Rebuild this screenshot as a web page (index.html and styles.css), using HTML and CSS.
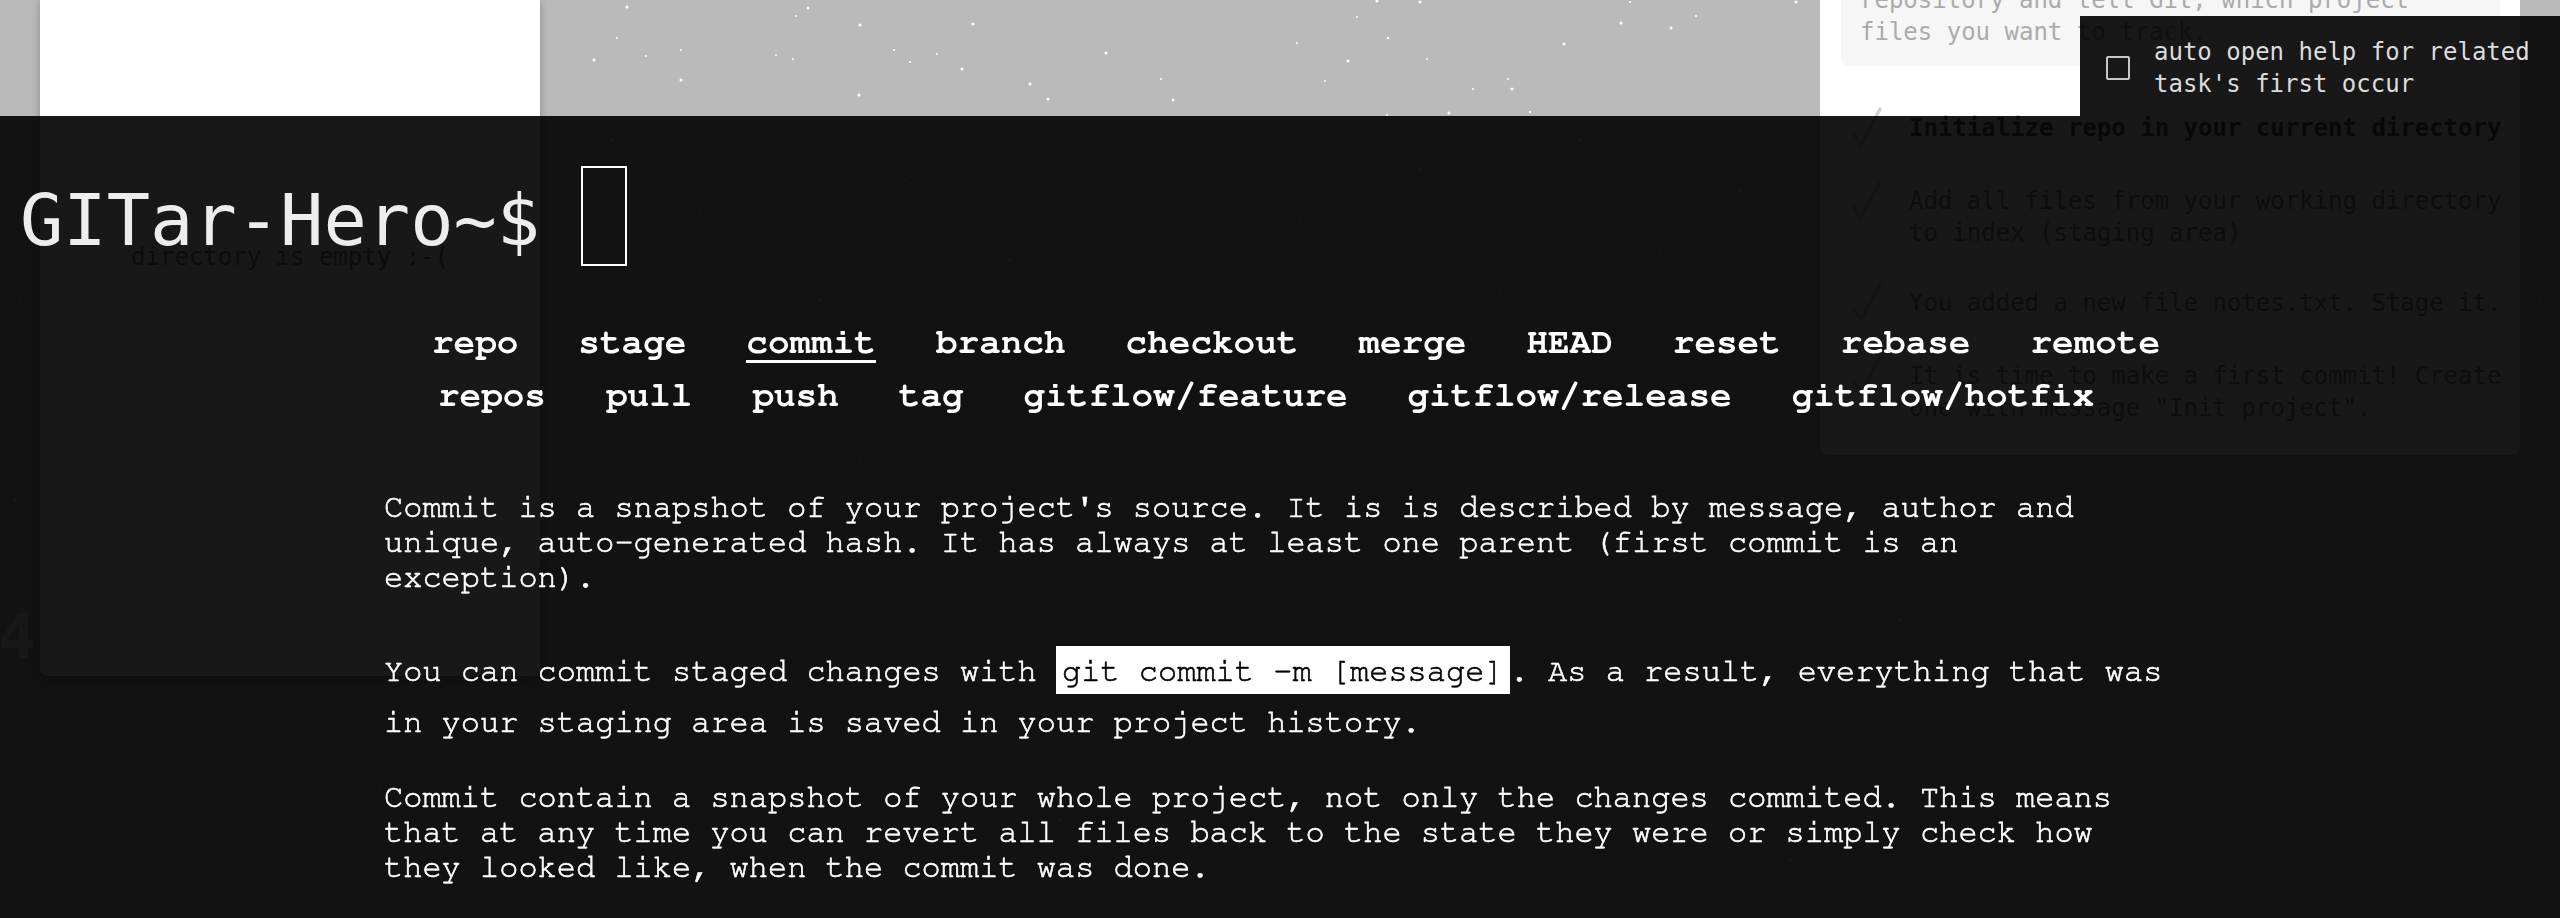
FILE: index.html
```html
<!DOCTYPE html>
<html lang="en">
<head>
<meta charset="utf-8">
<title>GITar-Hero</title>
<link rel="stylesheet" href="styles.css">
</head>
<body>
<div class="app">
  <svg class="stars" width="2560" height="918" viewBox="0 0 2560 918" aria-hidden="true">
    <g fill="#ffffff">
      <circle cx="627" cy="7" r="1.5"/><circle cx="808" cy="8" r="1.5"/><circle cx="796" cy="16" r="1"/>
      <circle cx="860" cy="25" r="1.5"/><circle cx="617" cy="38" r="1"/><circle cx="681" cy="50" r="1"/>
      <circle cx="594" cy="60" r="1.5"/><circle cx="646" cy="56" r="1"/><circle cx="776" cy="55" r="1"/>
      <circle cx="793" cy="59" r="1"/><circle cx="894" cy="50" r="1"/><circle cx="681" cy="80" r="1.5"/>
      <circle cx="859" cy="95" r="1.5"/><circle cx="1377" cy="1" r="1.5"/><circle cx="1420" cy="2" r="1.5"/>
      <circle cx="1630" cy="2" r="1"/><circle cx="1796" cy="2" r="1.5"/><circle cx="1357" cy="17" r="1"/>
      <circle cx="1696" cy="16" r="1"/><circle cx="973" cy="24" r="1.5"/><circle cx="1621" cy="23" r="1.5"/>
      <circle cx="1671" cy="28" r="1.5"/><circle cx="1388" cy="38" r="1.2"/><circle cx="1297" cy="43" r="1"/>
      <circle cx="1564" cy="44" r="1.5"/><circle cx="1106" cy="53" r="1.5"/><circle cx="937" cy="54" r="1"/>
      <circle cx="910" cy="62" r="1"/><circle cx="1348" cy="61" r="1.5"/><circle cx="1427" cy="59" r="1"/>
      <circle cx="962" cy="69" r="1.5"/><circle cx="1161" cy="79" r="1"/><circle cx="1325" cy="81" r="1"/>
      <circle cx="1508" cy="79" r="1"/><circle cx="1030" cy="84" r="1.5"/><circle cx="1473" cy="89" r="1"/>
      <circle cx="1512" cy="89" r="1.5"/><circle cx="1048" cy="99" r="1.5"/><circle cx="1173" cy="100" r="1.5"/>
      <circle cx="1449" cy="113" r="1.5"/><circle cx="1530" cy="112" r="1.2"/><circle cx="1387" cy="115" r="1"/>
      <circle cx="612" cy="140" r="1.5"/><circle cx="700" cy="210" r="1"/><circle cx="820" cy="300" r="1.5"/>
      <circle cx="905" cy="180" r="1"/><circle cx="1010" cy="260" r="1.5"/><circle cx="1120" cy="150" r="1"/>
      <circle cx="1210" cy="330" r="1.5"/><circle cx="1300" cy="220" r="1"/><circle cx="1420" cy="170" r="1.5"/>
      <circle cx="1500" cy="290" r="1"/><circle cx="1580" cy="140" r="1.5"/><circle cx="1660" cy="250" r="1"/>
      <circle cx="1740" cy="190" r="1.5"/><circle cx="600" cy="420" r="1"/><circle cx="720" cy="500" r="1.5"/>
      <circle cx="860" cy="460" r="1"/><circle cx="980" cy="540" r="1.5"/><circle cx="1090" cy="480" r="1"/>
      <circle cx="1230" cy="560" r="1.5"/><circle cx="1350" cy="430" r="1"/><circle cx="1470" cy="520" r="1.5"/>
      <circle cx="1600" cy="470" r="1"/><circle cx="1720" cy="560" r="1.5"/><circle cx="650" cy="700" r="1"/>
      <circle cx="780" cy="760" r="1.5"/><circle cx="930" cy="680" r="1"/><circle cx="1060" cy="820" r="1.5"/>
      <circle cx="1180" cy="740" r="1"/><circle cx="1320" cy="880" r="1.5"/><circle cx="1440" cy="700" r="1"/>
      <circle cx="1560" cy="800" r="1.5"/><circle cx="1690" cy="690" r="1"/><circle cx="1790" cy="860" r="1.5"/>
      <circle cx="100" cy="760" r="1"/><circle cx="240" cy="840" r="1.5"/><circle cx="380" cy="790" r="1"/>
      <circle cx="1900" cy="620" r="1.5"/><circle cx="2050" cy="700" r="1"/><circle cx="2200" cy="560" r="1.5"/>
      <circle cx="2350" cy="650" r="1"/><circle cx="2480" cy="780" r="1.5"/><circle cx="20" cy="300" r="1"/>
      <circle cx="15" cy="500" r="1.5"/><circle cx="2540" cy="300" r="1"/><circle cx="2545" cy="600" r="1.5"/>
    </g>
  </svg>
  <div class="counter">41</div>

  <aside class="workdir">
    <p class="empty">directory is empty :-(</p>
  </aside>

  <div class="graph"></div>

  <section class="tasks">
    <p class="hint">First of all you have to create a new repository and tell Git, which project files you want to track.</p>
    <ul class="task-list">
      <li class="task current">
        <svg class="check" width="32" height="40" viewBox="0 0 32 40"><polyline points="3,26 11,38 30,2"/></svg>
        <span>Initialize repo in your current directory</span>
      </li>
      <li class="task">
        <svg class="check" width="32" height="40" viewBox="0 0 32 40"><polyline points="3,26 11,38 30,2"/></svg>
        <span>Add all files from your working directory to index (staging area)</span>
      </li>
      <li class="task">
        <svg class="check" width="32" height="40" viewBox="0 0 32 40"><polyline points="3,26 11,38 30,2"/></svg>
        <span>You added a new file notes.txt. Stage it.</span>
      </li>
      <li class="task">
        <svg class="check" width="32" height="40" viewBox="0 0 32 40"><polyline points="3,26 11,38 30,2"/></svg>
        <span>It is time to make a first commit! Create one with message "Init project".</span>
      </li>
    </ul>
  </section>
</div>

<div class="overlay">
  <h1 class="prompt">GITar-Hero~$ <span class="cursor"></span></h1>
  <div class="help">
    <ul class="nav">
      <li>repo</li>
      <li>stage</li>
      <li class="active">commit</li>
      <li>branch</li>
      <li>checkout</li>
      <li>merge</li>
      <li>HEAD</li>
      <li>reset</li>
      <li>rebase</li>
      <li>remote</li>
      <li>repos</li>
      <li>pull</li>
      <li>push</li>
      <li>tag</li>
      <li>gitflow/feature</li>
      <li>gitflow/release</li>
      <li>gitflow/hotfix</li>
    </ul>
    <div class="article">
      <p>Commit is a snapshot of your project's source. It is is described by message, author and unique, auto-generated hash. It has always at least one parent (first commit is an exception).</p>
      <p>You can commit staged changes with <code>git commit -m [message]</code>. As a result, everything that was in your staging area is saved in your project history.</p>
      <p>Commit contain a snapshot of your whole project, not only the changes commited. This means that at any time you can revert all files back to the state they were or simply check how they looked like, when the commit was done.</p>
    </div>
  </div>
</div>

<label class="autohelp">
  <input type="checkbox" class="autohelp-box">
  <span class="autohelp-text">auto open help for related task's first occur</span>
</label>
</body>
</html>
```

FILE: styles.css
```css
* {
  box-sizing: border-box;
  margin: 0;
  padding: 0;
}

html,
body {
  width: 2560px;
  height: 918px;
  overflow: hidden;
}

body {
  position: relative;
  background: #bababa;
  font-family: "DejaVu Sans Mono", monospace;
}

/* ---------- background application ---------- */
.app {
  position: relative;
  display: flex;
  align-items: flex-start;
  height: 918px;
}

.stars {
  position: absolute;
  left: 0;
  top: 0;
}

.counter {
  position: absolute;
  left: -2px;
  top: 602px;
  font-family: "DejaVu Sans Mono", monospace;
  font-weight: bold;
  font-size: 62px;
  line-height: 70px;
  color: #ffffff;
}

.workdir {
  position: relative;
  flex: 0 0 500px;
  margin-left: 40px;
  height: 676px;
  padding-top: 241px;
  background: #ffffff;
  border-radius: 0 0 8px 8px;
  box-shadow: 0 2px 8px rgba(0, 0, 0, 0.25);
  text-align: center;
}

.empty {
  font-size: 24px;
  line-height: 32px;
  color: #7c7c7c;
}

.graph {
  flex: 1;
}

.tasks {
  position: relative;
  flex: 0 0 700px;
  margin-right: 40px;
  padding: 0 15px 31px 21px;
  background: #ffffff;
  border-radius: 0 0 8px 8px;
  font-size: 24px;
  line-height: 32px;
}

.hint {
  margin-top: -64px;
  margin-right: 5px;
  padding: 16px 19px 18px;
  background: #f6f6f6;
  border-radius: 8px;
  color: #ababab;
}

.task-list {
  list-style: none;
  display: flex;
  flex-direction: column;
  gap: 38px;
  margin-top: 46px;
}

.task {
  display: flex;
  align-items: flex-start;
  gap: 27px;
  padding-left: 9px;
  color: #8c8c8c;
}

.task.current {
  color: #5a5a5a;
  font-weight: bold;
}

.check {
  flex: 0 0 32px;
  margin-top: -5px;
  fill: none;
  stroke: #d2d2d2;
  stroke-width: 3.5;
  stroke-linecap: round;
  stroke-linejoin: round;
}

/* ---------- help overlay ---------- */
.overlay {
  position: fixed;
  top: 116px;
  left: 0;
  right: 0;
  bottom: 0;
  background: rgba(0, 0, 0, 0.904);
  color: #ffffff;
  font-family: "Nimbus Mono PS", "Nimbus Mono L", "FreeMono", "Courier New", "Liberation Mono", monospace;
}

.prompt {
  padding: 50px 0 0 20px;
  font-family: "DejaVu Sans Mono", monospace;
  font-weight: normal;
  font-size: 72px;
  line-height: 72px;
  color: #ededed;
  white-space: pre;
}

.cursor {
  display: inline-block;
  width: 46px;
  height: 100px;
  margin-left: -3px;
  border: 2px solid #ffffff;
  vertical-align: -21px;
}

.help {
  width: 1792px;
  margin: 0 auto;
}

.nav {
  list-style: none;
  display: flex;
  flex-wrap: wrap;
  justify-content: center;
  column-gap: 60px;
  row-gap: 14px;
  margin: 58px -48px 0 -16px;
}

.nav li {
  font-weight: bold;
  font-size: 36px;
  line-height: 36px;
  border-bottom: 3px solid transparent;
}

.nav li:last-child {
  margin-right: 60px;
}

.nav li.active {
  border-bottom-color: #ffffff;
}

.article {
  margin-top: 74px;
  font-size: 32px;
  line-height: 35px;
  -webkit-text-stroke: 0.6px #ffffff;
}

.article p + p {
  margin-top: 40px;
}

.article code {
  display: inline-block;
  margin: 11px 0;
  padding: 8px 6px 5px;
  background: #ffffff;
  color: #000000;
  font: inherit;
  -webkit-text-stroke: 0.6px #000000;
}

/* ---------- auto-help toggle ---------- */
.autohelp {
  position: absolute;
  top: 16px;
  left: 2080px;
  right: 0;
  height: 100px;
  display: flex;
  align-items: flex-start;
  gap: 24px;
  padding: 20px 20px 0 26px;
  background: rgba(0, 0, 0, 0.904);
  color: #dcdcdc;
  font-family: "DejaVu Sans Mono", monospace;
  font-size: 24px;
  line-height: 32px;
}

.autohelp-box {
  appearance: none;
  -webkit-appearance: none;
  flex: 0 0 24px;
  width: 24px;
  height: 24px;
  margin-top: 20px;
  border: 2px solid #c8c8c8;
  border-radius: 2px;
  background: transparent;
}
```
